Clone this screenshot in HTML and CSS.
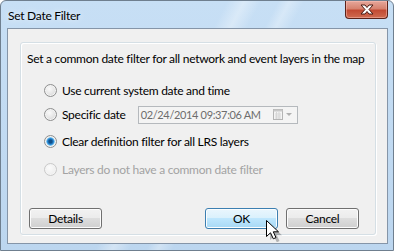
FILE: index.html
```html
<!DOCTYPE html>
<html>
<head>
<meta charset="utf-8">
<link rel="stylesheet" href="styles.css">
</head>
<body>
<div class="window">
  <div class="titlebar">
    <span class="title">Set Date Filter</span>
    <div class="close">
      <svg width="16" height="11" viewBox="0 0 16 11">
        <path d="M2 1 H6 L8 3.5 L10 1 H14 L10 5.5 L14 10 H10 L8 7.5 L6 10 H2 L6 5.5 Z" fill="#fff" stroke="#4a1a12" stroke-width="1" stroke-linejoin="round"/>
      </svg>
    </div>
  </div>
  <div class="client">
    <div class="group">
      <div class="desc">Set a common date filter for all network and event layers in the map</div>
      <div class="options">
        <div class="opt o1"><span class="radio"></span><span class="label">Use current system date and time</span></div>
        <div class="opt o2"><span class="radio"></span><span class="label">Specific date</span>
          <div class="datebox"><span class="datetext">02/24/2014 09:37:06 AM</span>
            <svg class="cal" width="20" height="12" viewBox="0 0 20 12">
              <rect x="0.5" y="0.5" width="9" height="10" fill="#f4f4f4" stroke="#b4b4b4"/>
              <rect x="0.5" y="0.5" width="9" height="2" fill="#c8c8c8"/>
              <path d="M2 5 H8 M2 7 H8 M2 9 H8 M3.5 3 V10 M6 3 V10" stroke="#d6d6d6" stroke-width="1"/>
              <path d="M13 4 H19 L16 7 Z" fill="#b0b0b0"/>
            </svg>
          </div>
        </div>
        <div class="opt o3"><span class="radio on"></span><span class="label">Clear definition filter for all LRS layers</span></div>
        <div class="opt disabled"><span class="radio dis"></span><span class="label">Layers do not have a common date filter</span></div>
      </div>
      <div class="buttons">
        <div class="btn">Details</div>
        <div class="spacer"></div>
        <div class="btn hot">OK</div>
        <div class="btn">Cancel</div>
      </div>
      <svg class="cursor" width="16" height="22" viewBox="0 0 16 22">
        <path d="M2.5 2.5 V18.5 L6.5 14.8 L9.3 20.8 L12 19.6 L9.3 13.8 H14.5 Z" fill="rgba(0,0,0,0.25)" transform="translate(1.5,1.5)"/>
        <path d="M0.5 0.5 V16.5 L4.5 12.8 L7.3 18.8 L10 17.6 L7.3 11.8 H12.5 Z" fill="#fff" stroke="#000" stroke-width="1" stroke-linejoin="miter"/>
      </svg>
    </div>
  </div>
</div>
</body>
</html>
```
FILE: styles.css
```css
html, body {
  margin: 0;
  padding: 0;
}
body {
  width: 394px;
  height: 251px;
  overflow: hidden;
  font-family: Lato, "Liberation Sans", sans-serif;
  font-size: 12px;
  letter-spacing: -0.27px;
  white-space: nowrap;
}
.window {
  position: relative;
  width: 394px;
  height: 251px;
  box-sizing: border-box;
  border: 1px solid #6f7f8f;
  border-radius: 6px 6px 0 0;
  background:
    linear-gradient(118deg, rgba(255,255,255,0) 0 200px, rgba(255,255,255,0.35) 215px, rgba(255,255,255,0) 230px, rgba(255,255,255,0) 245px, rgba(255,255,255,0.3) 255px, rgba(255,255,255,0) 268px),
    linear-gradient(180deg, #c7dff5 0%, #bcd6ef 100%);
  padding: 0 5px 6px 6px;
  display: flex;
  flex-direction: column;
}
.titlebar {
  height: 27px;
  display: flex;
  align-items: flex-start;
  justify-content: space-between;
}
.title {
  margin-top: 7px;
  margin-left: 1px;
  color: #000;
  font-size: 12px;
  text-shadow: 0 0 6px rgba(255,255,255,0.9);
}
.close {
  width: 43px;
  height: 18px;
  box-sizing: border-box;
  border: 1px solid #5b2219;
  border-top: none;
  border-radius: 0 0 4px 4px;
  background: linear-gradient(180deg, #e6a79b 0%, #d6826f 45%, #c24a33 55%, #cf6b50 100%);
  box-shadow: inset 0 0 0 1px rgba(255,200,190,0.45);
  display: flex;
  align-items: center;
  justify-content: center;
}
.client {
  flex: 1;
  min-width: 0;
  border: 1px solid #8595a8;
  background: #f0f0f0;
  padding: 13px 11px 8px 12px;
  display: flex;
}
.group {
  position: relative;
  flex: 1;
  min-width: 0;
  border: 1px solid #d5dfe5;
  border-radius: 3px;
  box-shadow: inset 1px 1px 0 #fff, 1px 1px 0 #fff;
  padding: 9px 8px 0 6px;
  display: flex;
  flex-direction: column;
}
.desc {
  color: #000;
  line-height: 14px;
}
.options {
  margin-top: 18px;
  padding-left: 17px;
  display: flex;
  flex-direction: column;
}
.opt {
  height: 13px;
  display: flex;
  align-items: center;
  color: #000;
}
.opt.o1 { margin-bottom: 11px; }
.opt.o2 { margin-bottom: 14px; }
.opt.o3 { margin-bottom: 15px; }
.opt.disabled { color: #a3a3a3; }
.radio {
  width: 11px;
  height: 11px;
  border-radius: 50%;
  border: 1px solid #8e8f8f;
  background: radial-gradient(circle at 40% 35%, #fafafa 0%, #e6e6e6 50%, #c9c9c9 100%);
  box-shadow: inset 0 0 0 1px #f4f4f4;
  margin-right: 5px;
  flex: none;
}
.radio.on {
  background: radial-gradient(circle at 50% 50%, #0f4f8a 0 1.5px, #2a8ad4 3px, #7fc6f0 4px, #e8e8e8 4.6px, #f4f4f4 100%);
}
.radio.dis {
  border-color: #c9c9c9;
  background: radial-gradient(circle at 40% 35%, #fbfbfb 0%, #f0f0f0 60%, #e4e4e4 100%);
}
.datebox {
  margin-left: 12px;
  width: 160px;
  height: 18px;
  box-sizing: border-box;
  border: 1px solid #b5b9bd;
  background: #f4f4f4;
  display: flex;
  align-items: center;
  justify-content: space-between;
  padding: 0 4px 0 2px;
}
.datetext {
  color: #6d6d6d;
  font-size: 11px;
  letter-spacing: -0.35px;
}
.cal { flex: none; }
.buttons {
  margin-top: auto;
  margin-bottom: 5px;
  padding-left: 2px;
  padding-right: 8px;
  display: flex;
  gap: 8px;
}
.spacer { flex: 1; }
.btn {
  width: 73px;
  height: 21px;
  box-sizing: border-box;
  border: 1px solid #707070;
  border-radius: 3px;
  background: linear-gradient(180deg, #f2f2f2 0%, #ebebeb 50%, #dddddd 50%, #cfcfcf 100%);
  box-shadow: inset 0 0 0 1px #fcfcfc;
  display: flex;
  align-items: center;
  justify-content: center;
  color: #000;
}
.btn.hot {
  border-color: #3c7fb1;
  background: linear-gradient(180deg, #eaf6fd 0%, #d9f0fc 50%, #bee6fd 50%, #a7d9f5 100%);
  box-shadow: inset 0 0 0 1px #fbfdfe;
}
.cursor {
  position: absolute;
  left: 245px;
  top: 177px;
}
```
